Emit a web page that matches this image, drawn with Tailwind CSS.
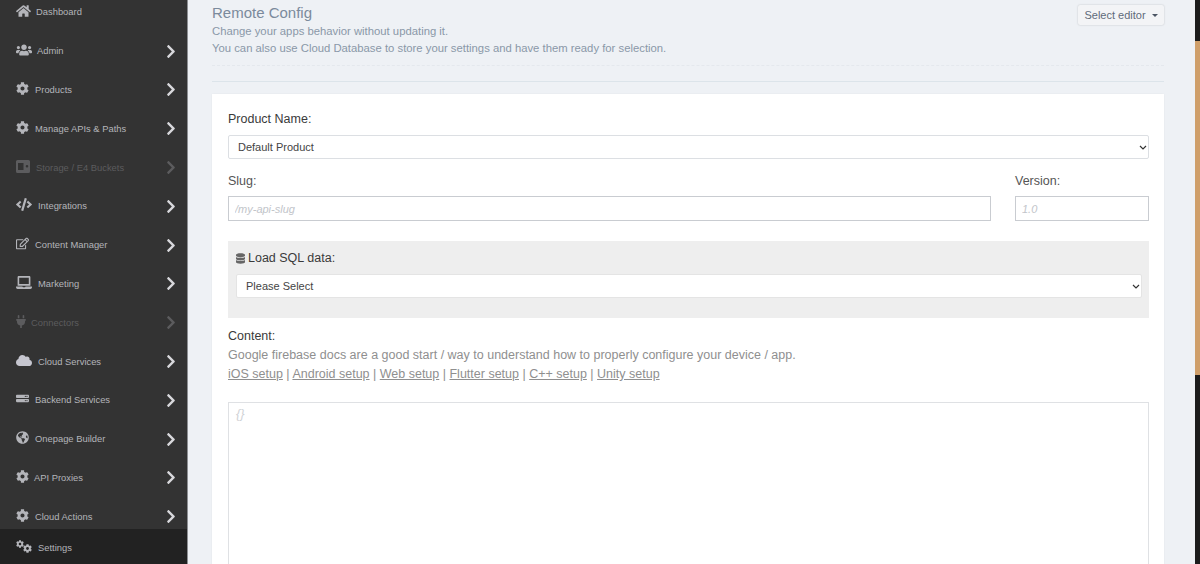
<!DOCTYPE html>
<html>
<head>
<meta charset="utf-8">
<script src="https://cdn.jsdelivr.net/npm/@tailwindcss/browser@4"></script>
</head>
<body class="h-[564px] w-[1200px] overflow-hidden bg-[#eef1f5] font-['Liberation_Sans',Arial,sans-serif]">
<svg class="hidden" xmlns="http://www.w3.org/2000/svg">
<symbol id="chev" viewBox="0 0 320 512"><path fill="currentColor" d="M285.476 272.971L91.132 467.314c-9.373 9.373-24.569 9.373-33.941 0l-22.667-22.667c-9.357-9.357-9.375-24.522-.04-33.901L188.505 256 34.484 101.255c-9.335-9.379-9.317-24.544.04-33.901l22.667-22.667c9.373-9.373 24.569-9.373 33.941 0L285.475 239.03c9.373 9.372 9.373 24.568.001 33.941z"/></symbol>
<symbol id="cog" viewBox="0 0 512 512"><path fill="currentColor" d="M487.4 315.7l-42.6-24.6c4.3-23.2 4.3-47 0-70.2l42.6-24.6c4.9-2.8 7.1-8.6 5.5-14-11.1-35.6-30-67.8-54.7-94.6-3.8-4.1-10-5.1-14.8-2.3L380.8 110c-17.9-15.4-38.5-27.3-60.8-35.1V25.8c0-5.6-3.9-10.5-9.4-11.7-36.7-8.2-74.3-7.8-109.2 0-5.5 1.2-9.4 6.1-9.4 11.7V75c-22.2 7.9-42.8 19.8-60.8 35.1L88.7 85.5c-4.9-2.8-11-1.9-14.8 2.3-24.7 26.7-43.6 58.9-54.7 94.6-1.7 5.4.6 11.2 5.5 14L67.3 221c-4.3 23.2-4.3 47 0 70.2l-42.6 24.6c-4.9 2.8-7.1 8.6-5.5 14 11.1 35.6 30 67.8 54.7 94.6 3.8 4.1 10 5.1 14.8 2.3l42.6-24.6c17.9 15.4 38.5 27.3 60.8 35.1v49.2c0 5.6 3.9 10.5 9.4 11.7 36.7 8.2 74.3 7.8 109.2 0 5.5-1.2 9.4-6.1 9.4-11.7v-49.2c22.2-7.9 42.8-19.8 60.8-35.1l42.6 24.6c4.9 2.8 11 1.9 14.8-2.3 24.7-26.7 43.6-58.9 54.7-94.6 1.5-5.5-.7-11.3-5.6-14.1zM256 336c-44.1 0-80-35.9-80-80s35.9-80 80-80 80 35.9 80 80-35.9 80-80 80z"/></symbol>
</svg>
<div class="flex h-[564px] w-[1200px]">
  <!-- Sidebar -->
  <aside class="relative h-full w-[188px] shrink-0 overflow-hidden border-r border-[#8d8f93] bg-[#333333] text-[9.4px] text-[#b4b5ba]">
    <nav class="-mt-[7px] flex flex-col">
      <a class="flex h-[38.8px] items-center pl-[16px]"><svg class="mr-[5px] -mt-[2px] w-[15px] h-[14px]" viewBox="0 0 576 512"><path fill="currentColor" d="M280.37 148.26L96 300.11V464a16 16 0 0 0 16 16l112.06-.29a16 16 0 0 0 15.92-16V368a16 16 0 0 1 16-16h64a16 16 0 0 1 16 16v95.64a16 16 0 0 0 16 16.05L464 480a16 16 0 0 0 16-16V300L295.67 148.26a12.19 12.19 0 0 0-15.3 0zM571.6 251.47L488 182.56V44.05a12 12 0 0 0-12-12h-56a12 12 0 0 0-12 12v72.61L318.47 43a48 48 0 0 0-61 0L4.34 251.47a12 12 0 0 0-1.6 16.9l25.5 31A12 12 0 0 0 45.15 301l235.22-193.74a12.19 12.19 0 0 1 15.3 0L530.9 301a12 12 0 0 0 16.9-1.6l25.5-31a12 12 0 0 0-1.7-16.93z"/></svg><span>Dashboard</span></a>
      <a class="flex h-[38.8px] items-center pl-[16px]"><svg class="mr-[5px] -mt-[3px] w-[16px] h-[14px]" viewBox="0 0 640 512"><path fill="currentColor" d="M96 224c35.3 0 64-28.7 64-64s-28.7-64-64-64-64 28.7-64 64 28.7 64 64 64zm448 0c35.3 0 64-28.7 64-64s-28.7-64-64-64-64 28.7-64 64 28.7 64 64 64zm32 32h-64c-17.6 0-33.5 7.1-45.1 18.6 40.3 22.1 68.9 62 75.1 109.4h66c17.7 0 32-14.3 32-32v-32c0-35.3-28.7-64-64-64zm-256 0c61.9 0 112-50.1 112-112S381.9 32 320 32 208 82.1 208 144s50.1 112 112 112zm76.8 32h-8.3c-20.8 10-43.9 16-68.5 16s-47.6-6-68.5-16h-8.3C179.6 288 128 339.6 128 403.2V432c0 26.5 21.5 48 48 48h288c26.5 0 48-21.5 48-48v-28.8c0-63.6-51.6-115.2-115.2-115.2zm-223.7-13.4C161.5 263.1 145.6 256 128 256H64c-35.3 0-64 28.7-64 64v32c0 17.7 14.3 32 32 32h65.9c6.3-47.4 34.9-87.3 75.2-109.4z"/></svg><span>Admin</span><svg class="ml-auto mr-[11px] h-[15px] w-[10px] text-[#d8d8dc]"><use href="#chev"/></svg></a>
      <a class="flex h-[38.8px] items-center pl-[16px]"><svg class="mr-[6px] -mt-[3px] w-[13px] h-[13px]"><use href="#cog"/></svg><span>Products</span><svg class="ml-auto mr-[11px] h-[15px] w-[10px] text-[#d8d8dc]"><use href="#chev"/></svg></a>
      <a class="flex h-[38.8px] items-center pl-[16px]"><svg class="mr-[6px] -mt-[3px] w-[13px] h-[13px]"><use href="#cog"/></svg><span>Manage APIs &amp; Paths</span><svg class="ml-auto mr-[11px] h-[15px] w-[10px] text-[#d8d8dc]"><use href="#chev"/></svg></a>
      <a class="flex h-[38.8px] items-center pl-[16px] text-[#5c5c5e]"><svg class="mr-[6px] -mt-[3px] w-[14px] h-[13px]" viewBox="0 0 14 13"><path fill="currentColor" fill-rule="evenodd" d="M1.5 0h11A1.5 1.5 0 0 1 14 1.500v10a1.500 1.500 0 0 1-1.500 1.500h-11A1.500 1.500 0 0 1 0 11.500v-10A1.500 1.500 0 0 1 1.500 0zM2 3v7h5.500V3zM11 5a1.300 1.300 0 1 0 0 2.600A1.300 1.300 0 0 0 11 5z"/></svg><span>Storage / E4 Buckets</span><svg class="ml-auto mr-[11px] h-[15px] w-[10px]"><use href="#chev"/></svg></a>
      <a class="flex h-[38.8px] items-center pl-[16px]"><svg class="mr-[6px] -mt-[3px] w-[16px] h-[13px]" viewBox="0 0 640 512"><path fill="currentColor" d="M278.9 511.5l-61-17.7c-6.4-1.8-10-8.5-8.2-14.9L346.2 8.7c1.8-6.4 8.5-10 14.9-8.2l61 17.7c6.4 1.8 10 8.5 8.2 14.9L293.8 503.3c-1.9 6.4-8.5 10.1-14.9 8.2zm-114-112.2l43.5-46.4c4.6-4.9 4.3-12.7-.8-17.2L117 256l90.6-79.7c5.1-4.5 5.5-12.3.8-17.2l-43.5-46.4c-4.5-4.8-12.1-5.1-17-.5L3.8 247.2c-5.1 4.7-5.1 12.8 0 17.5l144.1 135.1c4.9 4.6 12.5 4.4 17-.5zm327.2.6l144.1-135.1c5.1-4.7 5.1-12.8 0-17.5L492.1 112.1c-4.8-4.5-12.4-4.3-17 .5L431.6 159c-4.6 4.9-4.3 12.7.8 17.2L523 256l-90.6 79.7c-5.1 4.5-5.5 12.3-.8 17.2l43.5 46.4c4.5 4.9 12.1 5.1 17 .6z"/></svg><span>Integrations</span><svg class="ml-auto mr-[11px] h-[15px] w-[10px] text-[#d8d8dc]"><use href="#chev"/></svg></a>
      <a class="flex h-[38.8px] items-center pl-[16px]"><svg class="mr-[6px] -mt-[3px] w-[13px] h-[13px]" viewBox="0 0 576 512"><path fill="currentColor" d="M402.3 344.9l32-32c5-5 13.7-1.5 13.7 5.7V464c0 26.5-21.5 48-48 48H48c-26.5 0-48-21.5-48-48V112c0-26.5 21.5-48 48-48h273.5c7.1 0 10.7 8.6 5.7 13.7l-32 32c-1.5 1.5-3.500 2.300-5.700 2.300H48v352h352V350.500c0-2.100.8-4.100 2.300-5.600zm156.600-201.800L296.300 405.700l-90.400 10c-26.200 2.900-48.500-19.200-45.600-45.600l10-90.400L432.900 17.100c22.900-22.900 59.900-22.900 82.700 0l43.200 43.200c22.900 22.900 22.900 60 .1 82.800zM460.100 174L402 115.900 216.200 301.800l-7.300 65.300 65.300-7.300L460.100 174zm64.800-79.700l-43.200-43.200c-4.100-4.100-10.800-4.100-14.800 0L436 82l58.100 58.100 30.900-30.900c4-4.200 4-10.800-.1-14.900z"/></svg><span>Content Manager</span><svg class="ml-auto mr-[11px] h-[15px] w-[10px] text-[#d8d8dc]"><use href="#chev"/></svg></a>
      <a class="flex h-[38.8px] items-center pl-[16px]"><svg class="mr-[6px] -mt-[3px] w-[16px] h-[13px]" viewBox="0 0 640 512"><path fill="currentColor" d="M624 416H381.540c-.74 19.810-14.710 32-32.740 32H288c-18.690 0-33.020-17.470-32.770-32H16c-8.800 0-16 7.200-16 16v16c0 35.200 28.800 64 64 64h512c35.200 0 64-28.800 64-64v-16c0-8.800-7.200-16-16-16zM576 48c0-26.400-21.600-48-48-48H112C85.600 0 64 21.600 64 48v336h512V48zm-64 272H128V64h384v256z"/></svg><span>Marketing</span><svg class="ml-auto mr-[11px] h-[15px] w-[10px] text-[#d8d8dc]"><use href="#chev"/></svg></a>
      <a class="flex h-[38.8px] items-center pl-[16px] text-[#5c5c5e]"><svg class="mr-[5px] -mt-[3px] w-[10px] h-[13px]" viewBox="0 0 384 512"><path fill="currentColor" d="M320,32a32,32,0,0,0-64,0v96h64Zm48,128H16A16,16,0,0,0,0,176v32a16,16,0,0,0,16,16H32v32A160.070,160.070,0,0,0,160,412.800V512h64V412.800A160.070,160.070,0,0,0,352,256V224h16a16,16,0,0,0,16-16V176A16,16,0,0,0,368,160ZM128,32a32,32,0,0,0-64,0v96h64Z"/></svg><span>Connectors</span><svg class="ml-auto mr-[11px] h-[15px] w-[10px]"><use href="#chev"/></svg></a>
      <a class="flex h-[38.8px] items-center pl-[16px]"><svg class="mr-[6px] -mt-[3px] w-[16px] h-[13px]" viewBox="0 0 640 512"><path fill="#c6c6cf" d="M537.600 226.600c4.100-10.700 6.400-22.400 6.400-34.600 0-53-43-96-96-96-19.700 0-38.100 6-53.300 16.200C367 64.200 315.300 32 256 32c-88.400 0-160 71.600-160 160 0 2.700.1 5.400.2 8.100C40.200 219.800 0 273.200 0 336c0 79.500 64.500 144 144 144h368c70.700 0 128-57.300 128-128 0-61.900-44-113.600-102.400-125.400z"/></svg><span>Cloud Services</span><svg class="ml-auto mr-[11px] h-[15px] w-[10px] text-[#d8d8dc]"><use href="#chev"/></svg></a>
      <a class="flex h-[38.8px] items-center pl-[16px]"><svg class="mr-[6px] -mt-[4px] w-[13px] h-[11px]" viewBox="0 32 512 288"><path fill="currentColor" d="M480 160H32c-17.673 0-32-14.327-32-32V64c0-17.673 14.327-32 32-32h448c17.673 0 32 14.327 32 32v64c0 17.673-14.327 32-32 32zm-48-88c-13.255 0-24 10.745-24 24s10.745 24 24 24 24-10.745 24-24-10.745-24-24-24zm-64 0c-13.255 0-24 10.745-24 24s10.745 24 24 24 24-10.745 24-24-10.745-24-24-24zm112 248H32c-17.673 0-32-14.327-32-32v-64c0-17.673 14.327-32 32-32h448c17.673 0 32 14.327 32 32v64c0 17.673-14.327 32-32 32zm-48-88c-13.255 0-24 10.745-24 24s10.745 24 24 24 24-10.745 24-24-10.745-24-24-24zm-64 0c-13.255 0-24 10.745-24 24s10.745 24 24 24 24-10.745 24-24-10.745-24-24-24z"/></svg><span>Backend Services</span><svg class="ml-auto mr-[11px] h-[15px] w-[10px] text-[#d8d8dc]"><use href="#chev"/></svg></a>
      <a class="flex h-[38.8px] items-center pl-[16px]"><svg class="mr-[6px] -mt-[3px] w-[13px] h-[13px]" viewBox="0 0 496 512"><path fill="currentColor" d="M248 8C111.030 8 0 119.030 0 256s111.030 248 248 248 248-111.030 248-248S384.970 8 248 8zm82.290 357.600c-3.900 3.880-7.990 7.950-11.310 11.280-2.990 3-5.100 6.700-6.170 10.710-1.510 5.660-2.730 11.380-4.770 16.870l-17.390 46.850c-13.760 3-28 4.690-42.650 4.690v-27.380c1.690-12.620-7.640-36.260-22.630-51.250-6-6-9.370-14.140-9.370-22.630v-32.010c0-11.640-6.270-22.340-16.460-27.970-14.370-7.950-34.810-19.060-48.810-26.110-11.480-5.780-22.100-13.140-31.650-21.750l-.8-.72a114.792 114.792 0 0 1-18.060-20.740c-9.380-13.770-24.660-36.420-34.590-51.140 20.470-45.500 57.360-82.040 103.200-101.890l24.010 12.010C203.480 89.740 216 82.010 216 70.110v-11.300c7.990-1.290 16.120-2.110 24.390-2.420l28.300 28.300c6.250 6.250 6.250 16.380 0 22.630L264 112l-10.340 10.340c-3.120 3.120-3.120 8.190 0 11.310l4.690 4.690c3.120 3.120 3.120 8.190 0 11.310l-8 8a8.008 8.008 0 0 1-5.660 2.340h-8.990c-2.080 0-4.080.81-5.580 2.270l-9.920 9.650a8.008 8.008 0 0 0-1.580 9.310l15.590 31.190c2.660 5.320-1.210 11.580-7.150 11.580h-5.640c-1.930 0-3.790-.7-5.240-1.960l-9.280-8.060a16.017 16.017 0 0 0-15.550-3.100l-31.170 10.390a11.950 11.950 0 0 0-8.170 11.340c0 4.530 2.560 8.660 6.610 10.690l11.080 5.540c9.410 4.710 19.790 7.160 30.310 7.160s22.590 27.290 32 32h66.750c8.490 0 16.620 3.370 22.630 9.370l13.690 13.690a30.503 30.503 0 0 1 8.930 21.570 46.536 46.536 0 0 1-13.720 32.980zM417 274.250c-5.790-1.450-10.840-5-14.150-9.970l-17.980-26.970a23.970 23.970 0 0 1 0-26.620l19.590-29.380c2.320-3.470 5.500-6.290 9.240-8.150l12.980-6.490C440.200 193.590 448 223.870 448 256c0 8.670-.74 17.160-1.820 25.540L417 274.250z"/></svg><span>Onepage Builder</span><svg class="ml-auto mr-[11px] h-[15px] w-[10px] text-[#d8d8dc]"><use href="#chev"/></svg></a>
      <a class="flex h-[38.8px] items-center pl-[16px]"><svg class="mr-[5px] -mt-[3px] w-[13px] h-[13px]"><use href="#cog"/></svg><span>API Proxies</span><svg class="ml-auto mr-[11px] h-[15px] w-[10px] text-[#d8d8dc]"><use href="#chev"/></svg></a>
      <a class="flex h-[38.8px] items-center pl-[16px]"><svg class="mr-[6px] -mt-[3px] w-[13px] h-[13px]"><use href="#cog"/></svg><span>Cloud Actions</span><svg class="ml-auto mr-[11px] h-[15px] w-[10px] text-[#d8d8dc]"><use href="#chev"/></svg></a>
    </nav>
    <a class="absolute bottom-0 left-0 flex h-[35px] w-full items-center bg-[#222222] pl-[16px] pt-[3px]">
      <span class="relative mr-[6px] -mt-[4px] block h-[13px] w-[16px]">
        <svg class="absolute left-0 top-0 h-[8px] w-[8px]"><use href="#cog"/></svg>
        <svg class="absolute bottom-0 right-0 h-[9px] w-[9px]"><use href="#cog"/></svg>
      </span>
      <span>Settings</span>
    </a>
  </aside>

  <!-- Main -->
  <main class="h-full w-[1007px] shrink-0 overflow-hidden pl-[24px] pr-[31px]">
    <header class="relative h-[66px] border-b border-dashed border-[#e4e8ed] pt-[4px]">
      <h1 class="text-[15px] leading-[17px] text-[#7b8a9c]">Remote Config</h1>
      <p class="mt-[2px] text-[11.3px] leading-[17px] text-[#8a98a8]">Change your apps behavior without updating it.</p>
      <p class="text-[11.3px] leading-[17px] text-[#8a98a8]">You can also use Cloud Database to store your settings and have them ready for selection.</p>
      <button class="absolute right-0 top-[5px] flex h-[20px] w-[86px] items-center justify-center gap-[6px] rounded-[2px] bg-[#f3f4f6] text-[11px] text-[#5f6b7a] shadow-[0_0_2px_rgba(0,0,0,0.2)]">Select editor<span class="h-0 w-0 border-x-[3.5px] border-t-[3.5px] border-x-transparent border-t-[#4b5563]"></span></button>
    </header>
    <div class="mt-[15px] border-t border-[#dce4ea]"></div>
    <section class="mt-[12px] h-[600px] bg-white pl-[16px] pr-[15px] pt-[17px] shadow-[0_0_2px_rgba(0,0,0,0.05)]">
      <label class="block text-[12.5px] leading-[17px] text-[#3a3a3a]">Product Name:</label>
      <div class="relative mt-[7px]">
        <select class="block h-[24px] w-full appearance-none rounded-[2px] border border-[#dcdfe3] bg-white pl-[9px] text-[11px] text-[#444]"><option>Default Product</option></select>
        <svg class="pointer-events-none absolute right-[2px] top-[10px] h-[5px] w-[8px] text-[#333]" viewBox="0 0 8 5"><path d="M1 1l3 3 3-3" fill="none" stroke="currentColor" stroke-width="1.200"/></svg>
      </div>
      <div class="mt-[14px] flex gap-[24px]">
        <div class="flex-1">
          <label class="block text-[12.5px] leading-[17px] text-[#555]">Slug:</label>
          <input class="mt-[6px] block h-[25px] w-full border border-[#c9ccd1] bg-white px-[6px] text-[11px] italic placeholder:text-[#c2c5ca]" placeholder="/my-api-slug">
        </div>
        <div class="w-[134px]">
          <label class="block text-[12.5px] leading-[17px] text-[#555]">Version:</label>
          <input class="mt-[6px] block h-[25px] w-full border border-[#c9ccd1] bg-white px-[6px] text-[11px] italic placeholder:text-[#c2c5ca]" placeholder="1.0">
        </div>
      </div>
      <div class="mt-[20px] h-[77px] bg-[#eeeeee] pl-[8px] pr-[7px] pt-[9px]">
        <label class="flex items-center text-[12.5px] leading-[17px] text-[#3a3a3a]"><svg class="mr-[3px] h-[11px] w-[9px] text-[#666]" viewBox="0 0 448 512"><path fill="currentColor" d="M448 73.143v45.714C448 159.143 347.667 192 224 192S0 159.143 0 118.857V73.143C0 32.857 100.333 0 224 0s224 32.857 224 73.143zM448 176v102.857C448 319.143 347.667 352 224 352S0 319.143 0 278.857V176c48.125 33.143 136.208 48.572 224 48.572S399.874 209.143 448 176zm0 160v102.857C448 479.143 347.667 512 224 512S0 479.143 0 438.857V336c48.125 33.143 136.208 48.572 224 48.572S399.874 369.143 448 336z"/></svg>Load SQL data:</label>
        <div class="relative mt-[7px]">
          <select class="block h-[24px] w-full appearance-none rounded-[2px] border border-[#e4e4e4] bg-white pl-[9px] text-[11px] text-[#444]"><option>Please Select</option></select>
          <svg class="pointer-events-none absolute right-[2px] top-[10px] h-[5px] w-[8px] text-[#333]" viewBox="0 0 8 5"><path d="M1 1l3 3 3-3" fill="none" stroke="currentColor" stroke-width="1.200"/></svg>
        </div>
      </div>
      <p class="mt-[9px] text-[12.5px] leading-[19px] text-[#3a3a3a]">Content:</p>
      <p class="text-[12.5px] leading-[19px] text-[#8f8f8f]">Google firebase docs are a good start / way to understand how to properly configure your device / app.</p>
      <p class="text-[12.5px] leading-[19px] text-[#8f8f8f]"><a class="underline">iOS setup</a> | <a class="underline">Android setup</a> | <a class="underline">Web setup</a> | <a class="underline">Flutter setup</a> | <a class="underline">C++ setup</a> | <a class="underline">Unity setup</a></p>
      <textarea class="mt-[18px] block h-[300px] w-full border border-[#dfe1e4] bg-white px-[7px] py-[1px] text-[13px] italic placeholder:text-[#d0d2d6]" placeholder="{}"></textarea>
    </section>
  </main>

  <!-- Window edge -->
  <div class="flex h-full w-[5px] shrink-0 flex-col">
    <div class="h-[41px] bg-[#1c1c1c]"></div>
    <div class="h-[334px] bg-[#cf9f6a]"></div>
    <div class="flex-1 bg-[#1c1c1c]"></div>
  </div>
</div>
</body>
</html>
